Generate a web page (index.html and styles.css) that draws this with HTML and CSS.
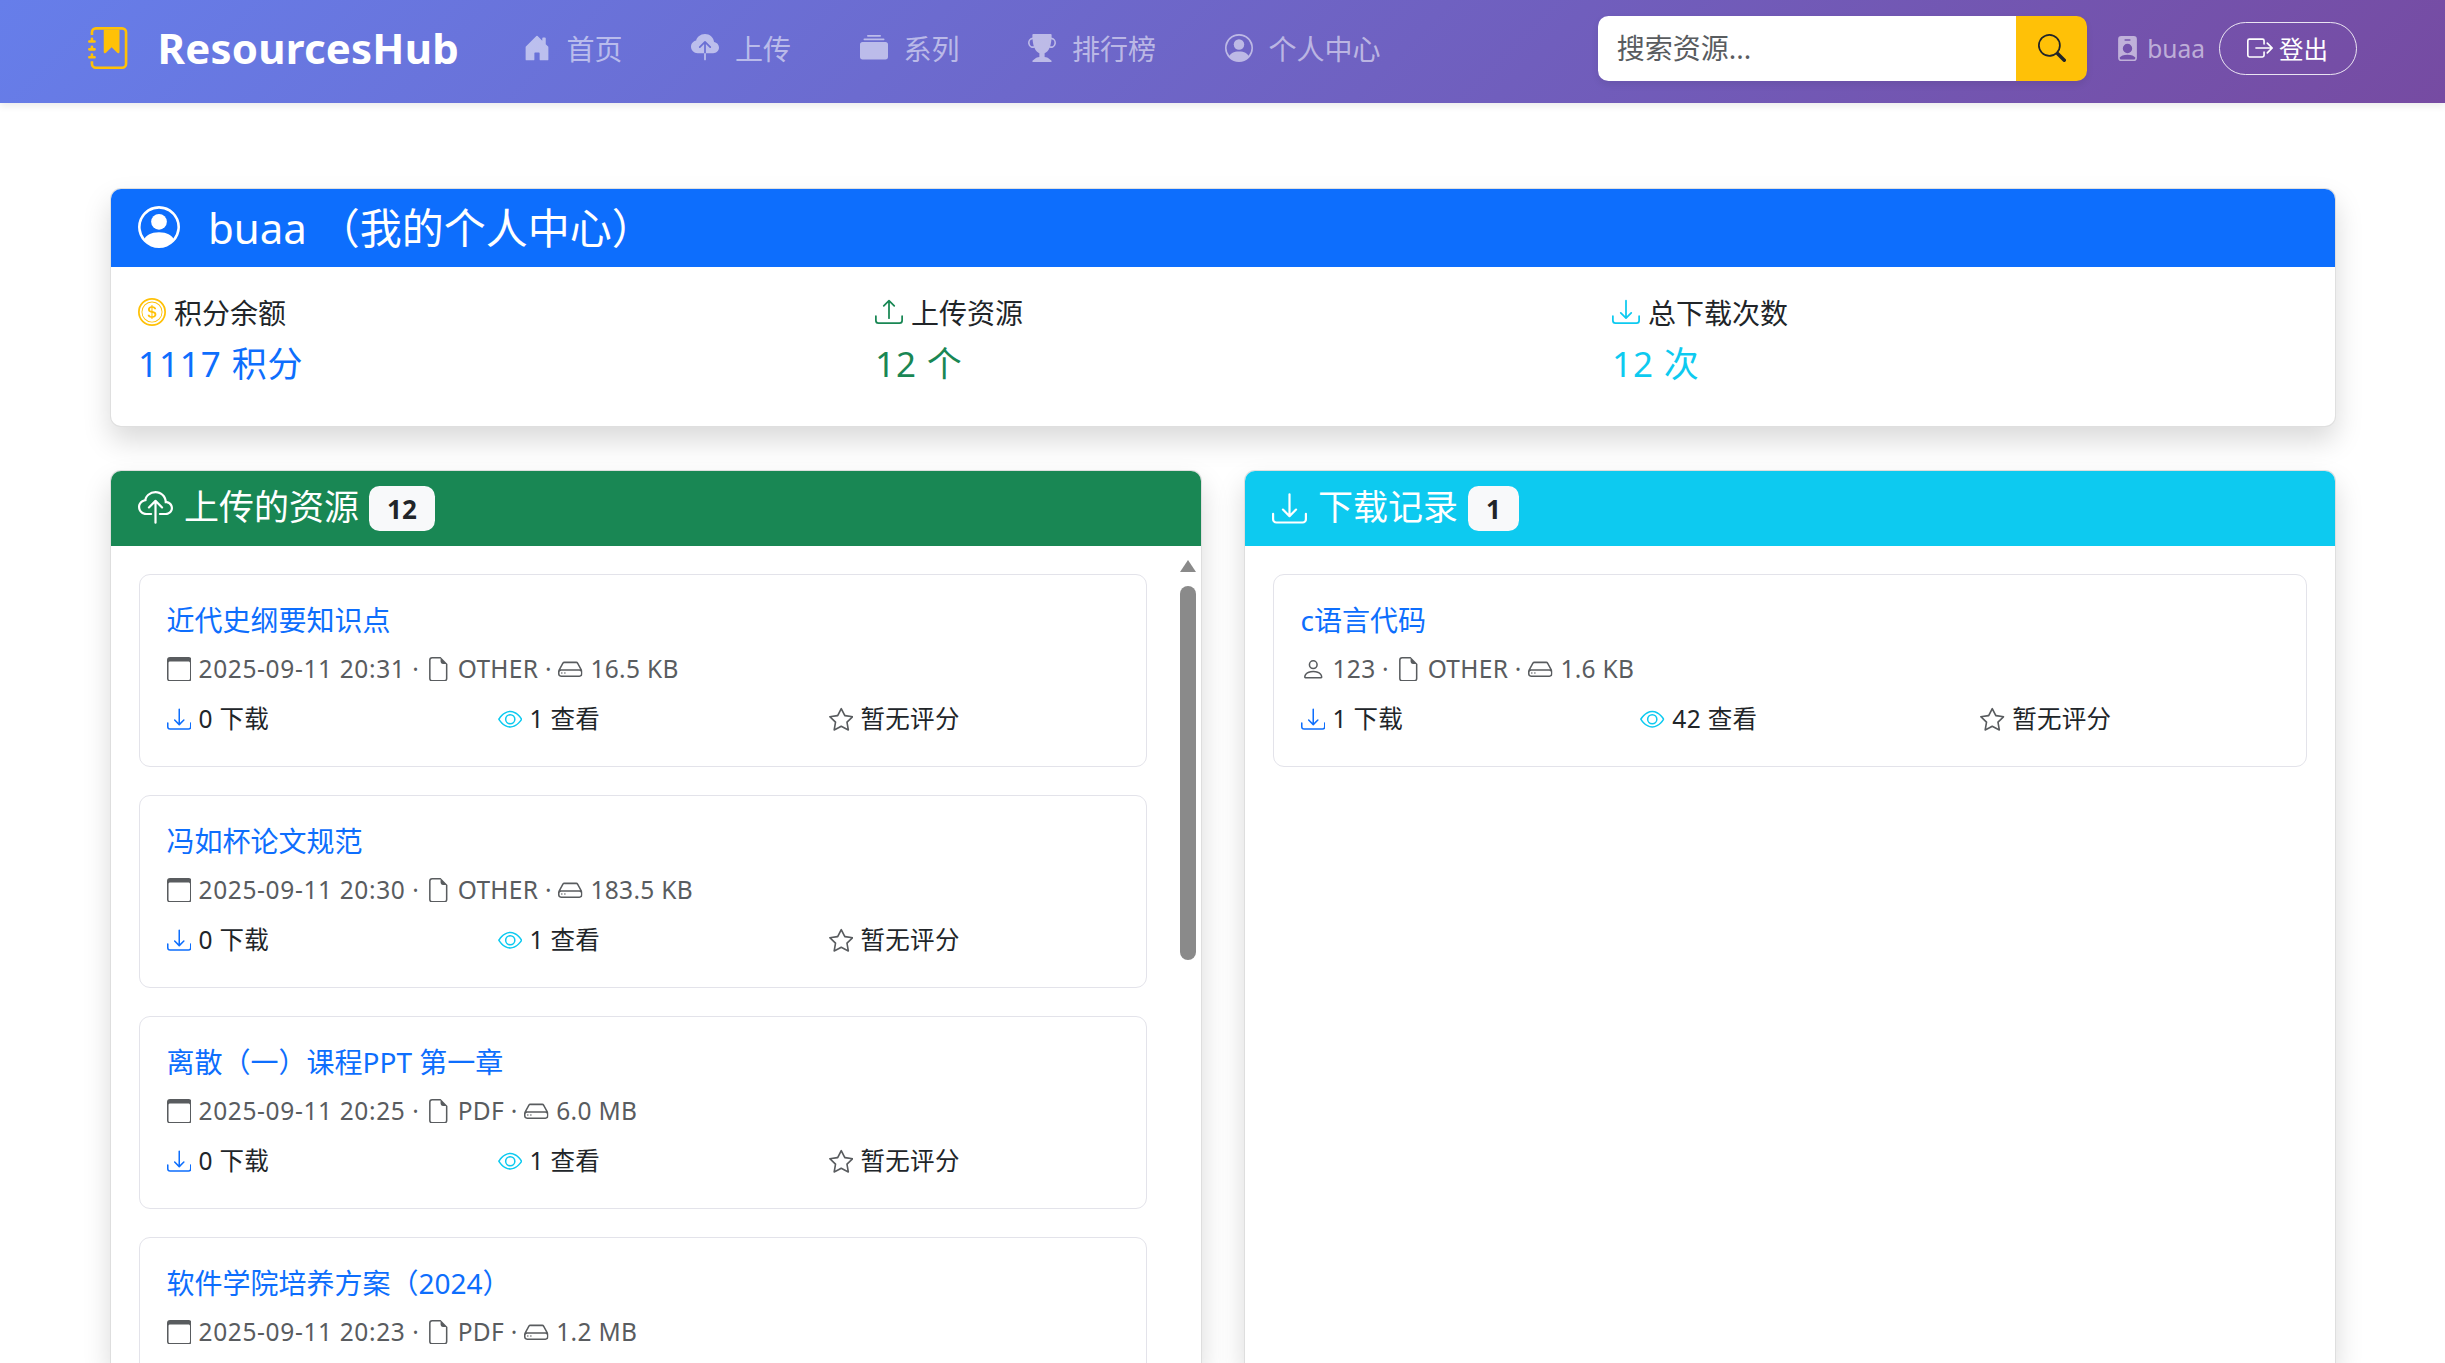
FILE: index.html
```html
<!DOCTYPE html>
<html lang="zh-CN">
<head>
<meta charset="utf-8">
<title>ResourcesHub</title>
<link rel="stylesheet" href="styles.css">
</head>
<body>
<svg class="sprite" xmlns="http://www.w3.org/2000/svg">
<symbol id="i-journal" viewBox="0 0 16 16"><path fill-rule="evenodd" d="M6 1h6v8.5a.5.5 0 0 1-.854.354L9 7.707 6.854 9.854A.5.5 0 0 1 6 9.5z"/><path d="M3 0h10a2 2 0 0 1 2 2v12a2 2 0 0 1-2 2H3a2 2 0 0 1-2-2v-1h1v1a1 1 0 0 0 1 1h10a1 1 0 0 0 1-1V2a1 1 0 0 0-1-1H3a1 1 0 0 0-1 1v1H1V2a2 2 0 0 1 2-2"/><path d="M1 5v-.5a.5.5 0 0 1 1 0V5h.5a.5.5 0 0 1 0 1h-2a.5.5 0 0 1 0-1zm0 3v-.5a.5.5 0 0 1 1 0V8h.5a.5.5 0 0 1 0 1h-2a.5.5 0 0 1 0-1zm0 3v-.5a.5.5 0 0 1 1 0v.5h.5a.5.5 0 0 1 0 1h-2a.5.5 0 0 1 0-1z"/></symbol>
<symbol id="i-house" viewBox="0 0 16 16"><path d="M6.5 14.5v-3.505c0-.245.25-.495.5-.495h2c.25 0 .5.25.5.5v3.5a.5.5 0 0 0 .5.5h4a.5.5 0 0 0 .5-.5v-7a.5.5 0 0 0-.146-.354L13 5.793V2.5a.5.5 0 0 0-.5-.5h-1a.5.5 0 0 0-.5.5v1.293L8.354 1.146a.5.5 0 0 0-.708 0l-6 6A.5.5 0 0 0 1.5 7.5v7a.5.5 0 0 0 .5.5h4a.5.5 0 0 0 .5-.5"/></symbol>
<symbol id="i-cloud-fill" viewBox="0 0 16 16"><path fill-rule="evenodd" d="M8 0a5.53 5.53 0 0 0-3.594 1.342c-.766.66-1.321 1.52-1.464 2.383C1.266 4.095 0 5.555 0 7.318 0 9.366 1.708 11 3.781 11H7.5V5.707L5.354 7.854a.5.5 0 1 1-.708-.708l3-3a.5.5 0 0 1 .708 0l3 3a.5.5 0 0 1-.708.708L8.5 5.707V11h4.188C14.502 11 16 9.57 16 7.773c0-1.636-1.242-2.969-2.834-3.194C12.923 1.999 10.69 0 8 0m-.5 14.5V11h1v3.5a.5.5 0 0 1-1 0"/></symbol>
<symbol id="i-collection" viewBox="0 0 16 16"><path d="M0 13a1.5 1.5 0 0 0 1.5 1.5h13A1.5 1.5 0 0 0 16 13V6a1.5 1.5 0 0 0-1.5-1.5h-13A1.5 1.5 0 0 0 0 6zM2 3a.5.5 0 0 0 .5.5h11a.5.5 0 0 0 0-1h-11A.5.5 0 0 0 2 3m2-2a.5.5 0 0 0 .5.5h7a.5.5 0 0 0 0-1h-7A.5.5 0 0 0 4 1"/></symbol>
<symbol id="i-trophy" viewBox="0 0 16 16"><path d="M2.5.5A.5.5 0 0 1 3 0h10a.5.5 0 0 1 .5.5q0 .807-.034 1.536a3 3 0 1 1-1.133 5.89c-.79 1.865-1.878 2.777-2.833 3.011v2.173l1.425.356c.194.048.377.135.537.255L13.3 15.1a.5.5 0 0 1-.3.9H3a.5.5 0 0 1-.3-.9l1.838-1.379c.16-.12.343-.207.537-.255L6.5 13.11v-2.173c-.955-.234-2.043-1.146-2.833-3.012a3 3 0 1 1-1.132-5.89A33 33 0 0 1 2.5.5m.099 2.54a2 2 0 0 0 .72 3.935c-.333-1.05-.588-2.346-.72-3.935m10.083 3.935a2 2 0 0 0 .72-3.935c-.133 1.59-.388 2.885-.72 3.935"/></symbol>
<symbol id="i-person-circle" viewBox="0 0 16 16"><path d="M11 6a3 3 0 1 1-6 0 3 3 0 0 1 6 0"/><path fill-rule="evenodd" d="M0 8a8 8 0 1 1 16 0A8 8 0 0 1 0 8m8-7a7 7 0 0 0-5.468 11.37C3.242 11.226 4.805 10 8 10s4.757 1.225 5.468 2.37A7 7 0 0 0 8 1"/></symbol>
<symbol id="i-search" viewBox="0 0 16 16"><path d="M11.742 10.344a6.5 6.5 0 1 0-1.397 1.398h-.001q.044.06.098.115l3.85 3.85a1 1 0 0 0 1.415-1.414l-3.85-3.85a1 1 0 0 0-.115-.1zM12 6.5a5.5 5.5 0 1 1-11 0 5.5 5.5 0 0 1 11 0"/></symbol>
<symbol id="i-badge" viewBox="0 0 16 16"><path d="M2 2a2 2 0 0 1 2-2h8a2 2 0 0 1 2 2v12a2 2 0 0 1-2 2H4a2 2 0 0 1-2-2zm4.5 0a.5.5 0 0 0 0 1h3a.5.5 0 0 0 0-1zM8 11a3 3 0 1 0 0-6 3 3 0 0 0 0 6m5 2.755C12.146 12.825 10.623 12 8 12s-4.146.826-5 1.755V14a1 1 0 0 0 1 1h8a1 1 0 0 0 1-1z"/></symbol>
<symbol id="i-logout" viewBox="0 0 16 16"><path fill-rule="evenodd" d="M10 12.5a.5.5 0 0 1-.5.5h-8a.5.5 0 0 1-.5-.5v-9a.5.5 0 0 1 .5-.5h8a.5.5 0 0 1 .5.5v2a.5.5 0 0 0 1 0v-2A1.5 1.5 0 0 0 9.5 2h-8A1.5 1.5 0 0 0 0 3.5v9A1.5 1.5 0 0 0 1.5 14h8a1.5 1.5 0 0 0 1.5-1.5v-2a.5.5 0 0 0-1 0z"/><path fill-rule="evenodd" d="M15.854 8.354a.5.5 0 0 0 0-.708l-3-3a.5.5 0 0 0-.708.708L14.293 7.5H5.5a.5.5 0 0 0 0 1h8.793l-2.147 2.146a.5.5 0 0 0 .708.708z"/></symbol>
<symbol id="i-coin" viewBox="0 0 16 16"><path d="M5.5 9.511c.076.954.83 1.697 2.182 1.785V12h.6v-.709c1.4-.098 2.218-.846 2.218-1.932 0-.987-.626-1.496-1.745-1.76l-.473-.112V5.57c.6.068.982.396 1.074.85h1.052c-.076-.919-.864-1.638-2.126-1.716V4h-.6v.719c-1.195.117-2.01.836-2.01 1.853 0 .9.606 1.472 1.613 1.707l.397.098v2.034c-.615-.093-1.022-.43-1.114-.9zm2.177-2.166c-.59-.137-.91-.416-.91-.836 0-.47.345-.822.915-.925v1.76h-.005zm.692 1.193c.717.166 1.048.435 1.048.91 0 .542-.412.914-1.135.982V8.518z"/><path d="M8 15A7 7 0 1 1 8 1a7 7 0 0 1 0 14m0 1A8 8 0 1 0 8 0a8 8 0 0 0 0 16"/><path d="M8 13.5a5.5 5.5 0 1 1 0-11 5.5 5.5 0 0 1 0 11m0 .5A6 6 0 1 0 8 2a6 6 0 0 0 0 12"/></symbol>
<symbol id="i-upload" viewBox="0 0 16 16"><path d="M.5 9.9a.5.5 0 0 1 .5.5v2.5a1 1 0 0 0 1 1h12a1 1 0 0 0 1-1v-2.5a.5.5 0 0 1 1 0v2.5a2 2 0 0 1-2 2H2a2 2 0 0 1-2-2v-2.5a.5.5 0 0 1 .5-.5"/><path d="M7.646 1.146a.5.5 0 0 1 .708 0l3 3a.5.5 0 0 1-.708.708L8.5 2.707V11.5a.5.5 0 0 1-1 0V2.707L5.354 4.854a.5.5 0 1 1-.708-.708z"/></symbol>
<symbol id="i-download" viewBox="0 0 16 16"><path d="M.5 9.9a.5.5 0 0 1 .5.5v2.5a1 1 0 0 0 1 1h12a1 1 0 0 0 1-1v-2.5a.5.5 0 0 1 1 0v2.5a2 2 0 0 1-2 2H2a2 2 0 0 1-2-2v-2.5a.5.5 0 0 1 .5-.5"/><path d="M7.646 11.854a.5.5 0 0 0 .708 0l3-3a.5.5 0 0 0-.708-.708L8.5 10.293V1.5a.5.5 0 0 0-1 0v8.793L5.354 8.146a.5.5 0 1 0-.708.708z"/></symbol>
<symbol id="i-cloud" viewBox="0 0 16 16"><path fill-rule="evenodd" d="M4.406 1.342A5.53 5.53 0 0 1 8 0c2.69 0 4.923 2 5.166 4.579C14.758 4.804 16 6.137 16 7.773 16 9.569 14.502 11 12.687 11H10a.5.5 0 0 1 0-1h2.688C13.979 10 15 8.988 15 7.773c0-1.216-1.02-2.228-2.313-2.228h-.5v-.5C12.188 2.825 10.328 1 8 1a4.53 4.53 0 0 0-2.941 1.1c-.757.652-1.153 1.438-1.153 2.055v.448l-.445.049C2.064 4.805 1 5.952 1 7.318 1 8.785 2.23 10 3.781 10H6a.5.5 0 0 1 0 1H3.781C1.708 11 0 9.366 0 7.318c0-1.763 1.266-3.223 2.942-3.593.143-.863.698-1.723 1.464-2.383"/><path fill-rule="evenodd" d="M7.646 4.146a.5.5 0 0 1 .708 0l3 3a.5.5 0 0 1-.708.708L8.5 5.707V14.5a.5.5 0 0 1-1 0V5.707L5.354 7.854a.5.5 0 1 1-.708-.708z"/></symbol>
<symbol id="i-calendar" viewBox="0 0 16 16"><path d="M14 0H2a2 2 0 0 0-2 2v12a2 2 0 0 0 2 2h12a2 2 0 0 0 2-2V2a2 2 0 0 0-2-2M1 3.857C1 3.384 1.448 3 2 3h12c.552 0 1 .384 1 .857v10.286c0 .473-.448.857-1 .857H2c-.552 0-1-.384-1-.857z"/></symbol>
<symbol id="i-file" viewBox="0 0 16 16"><path d="M14 4.5V14a2 2 0 0 1-2 2H4a2 2 0 0 1-2-2V2a2 2 0 0 1 2-2h5.5zm-3 0A1.5 1.5 0 0 1 9.5 3V1H4a1 1 0 0 0-1 1v12a1 1 0 0 0 1 1h8a1 1 0 0 0 1-1V4.5z"/></symbol>
<symbol id="i-hdd" viewBox="0 0 16 16"><path d="M4.5 11a.5.5 0 1 0 0-1 .5.5 0 0 0 0 1M3 10.5a.5.5 0 1 1-1 0 .5.5 0 0 1 1 0"/><path d="M16 11a2 2 0 0 1-2 2H2a2 2 0 0 1-2-2V9.51c0-.418.105-.83.305-1.197l2.472-4.531A1.5 1.5 0 0 1 4.094 3h7.812a1.5 1.5 0 0 1 1.317.782l2.472 4.53c.2.368.305.78.305 1.198zM3.655 4.26 1.592 8.043Q1.79 8 2 8h12c.14 0 .278.014.408.042L12.345 4.26a.5.5 0 0 0-.439-.26H4.094a.5.5 0 0 0-.44.26zM1 11a1 1 0 0 0 1 1h12a1 1 0 0 0 1-1v-1a1 1 0 0 0-1-1H2a1 1 0 0 0-1 1z"/></symbol>
<symbol id="i-eye" viewBox="0 0 16 16"><path d="M16 8s-3-5.5-8-5.5S0 8 0 8s3 5.5 8 5.5S16 8 16 8M1.173 8a13 13 0 0 1 1.66-2.043C4.12 4.668 5.88 3.5 8 3.5s3.879 1.168 5.168 2.457A13 13 0 0 1 14.828 8q-.086.13-.195.288c-.335.48-.83 1.12-1.465 1.755C11.879 11.332 10.119 12.5 8 12.5s-3.879-1.168-5.168-2.457A13 13 0 0 1 1.172 8z"/><path d="M8 5.5a2.5 2.5 0 1 0 0 5 2.5 2.5 0 0 0 0-5M4.5 8a3.5 3.5 0 1 1 7 0 3.5 3.5 0 0 1-7 0"/></symbol>
<symbol id="i-star" viewBox="0 0 16 16"><path d="M2.866 14.85c-.078.444.36.791.746.593l4.39-2.256 4.389 2.256c.386.198.824-.149.746-.592l-.83-4.73 3.522-3.356c.33-.314.16-.888-.282-.95l-4.898-.696L8.465.792a.513.513 0 0 0-.927 0L5.354 5.12l-4.898.696c-.441.062-.612.636-.283.95l3.523 3.356-.83 4.73zm4.905-2.767-3.686 1.894.694-3.957a.56.56 0 0 0-.163-.505L1.71 6.745l4.052-.576a.53.53 0 0 0 .393-.288L8 2.223l1.847 3.658a.53.53 0 0 0 .393.288l4.052.575-2.906 2.77a.56.56 0 0 0-.163.506l.694 3.957-3.686-1.894a.5.5 0 0 0-.461 0z"/></symbol>
<symbol id="i-person" viewBox="0 0 16 16"><path d="M8 8a3 3 0 1 0 0-6 3 3 0 0 0 0 6m2-3a2 2 0 1 1-4 0 2 2 0 0 1 4 0m4 8c0 1-1 1-1 1H3s-1 0-1-1 1-4 6-4 6 3 6 4m-1-.004c-.001-.246-.154-.986-.832-1.664C11.516 10.68 10.289 10 8 10s-3.516.68-4.168 1.332c-.678.678-.83 1.418-.832 1.664z"/></symbol>
</svg>

<nav class="navbar">
  <a class="brand" href="#"><svg class="brand-icon"><use href="#i-journal"/></svg><span class="brand-text">ResourcesHub</span></a>
  <ul class="nav-links">
    <li><a href="#"><svg class="nav-icon"><use href="#i-house"/></svg>首页</a></li>
    <li><a href="#"><svg class="nav-icon"><use href="#i-cloud-fill"/></svg>上传</a></li>
    <li><a href="#"><svg class="nav-icon"><use href="#i-collection"/></svg>系列</a></li>
    <li><a href="#"><svg class="nav-icon"><use href="#i-trophy"/></svg>排行榜</a></li>
    <li><a href="#"><svg class="nav-icon"><use href="#i-person-circle"/></svg>个人中心</a></li>
  </ul>
  <form class="search">
    <input class="search-input" type="text" placeholder="搜索资源...">
    <button class="search-btn" type="button"><svg class="search-icon"><use href="#i-search"/></svg></button>
  </form>
  <span class="nav-user"><svg class="user-icon"><use href="#i-badge"/></svg>buaa</span>
  <a class="logout" href="#"><svg class="logout-icon"><use href="#i-logout"/></svg>登出</a>
</nav>

<main class="page">
  <section class="card profile">
    <header class="profile-head"><svg class="profile-icon"><use href="#i-person-circle"/></svg><h1 class="profile-name">buaa （我的个人中心）</h1></header>
    <div class="profile-stats">
      <div>
        <div class="stat-label"><svg class="stat-icon c-yellow"><use href="#i-coin"/></svg>积分余额</div>
        <div class="stat-value c-blue">1117 积分</div>
      </div>
      <div>
        <div class="stat-label"><svg class="stat-icon c-green"><use href="#i-upload"/></svg>上传资源</div>
        <div class="stat-value c-green">12 个</div>
      </div>
      <div>
        <div class="stat-label"><svg class="stat-icon c-cyan"><use href="#i-download"/></svg>总下载次数</div>
        <div class="stat-value c-cyan">12 次</div>
      </div>
    </div>
  </section>

  <div class="columns">
    <section class="card panel">
      <header class="panel-head bg-green"><svg class="panel-icon"><use href="#i-cloud"/></svg><h2 class="panel-title">上传的资源</h2><span class="badge">12</span></header>
      <div class="list">
        <article class="item">
          <a class="item-title" href="#">近代史纲要知识点</a>
          <p class="item-meta"><svg class="meta-icon"><use href="#i-calendar"/></svg><span class="date">2025-09-11 20:31</span> · <svg class="meta-icon"><use href="#i-file"/></svg>OTHER · <svg class="meta-icon"><use href="#i-hdd"/></svg>16.5 KB</p>
          <div class="item-stats">
            <span><svg class="meta-icon c-blue"><use href="#i-download"/></svg>0 下载</span>
            <span><svg class="meta-icon c-cyan"><use href="#i-eye"/></svg>1 查看</span>
            <span><svg class="meta-icon c-gray"><use href="#i-star"/></svg>暂无评分</span>
          </div>
        </article>
        <article class="item">
          <a class="item-title" href="#">冯如杯论文规范</a>
          <p class="item-meta"><svg class="meta-icon"><use href="#i-calendar"/></svg><span class="date">2025-09-11 20:30</span> · <svg class="meta-icon"><use href="#i-file"/></svg>OTHER · <svg class="meta-icon"><use href="#i-hdd"/></svg>183.5 KB</p>
          <div class="item-stats">
            <span><svg class="meta-icon c-blue"><use href="#i-download"/></svg>0 下载</span>
            <span><svg class="meta-icon c-cyan"><use href="#i-eye"/></svg>1 查看</span>
            <span><svg class="meta-icon c-gray"><use href="#i-star"/></svg>暂无评分</span>
          </div>
        </article>
        <article class="item">
          <a class="item-title" href="#">离散（一）课程PPT 第一章</a>
          <p class="item-meta"><svg class="meta-icon"><use href="#i-calendar"/></svg><span class="date">2025-09-11 20:25</span> · <svg class="meta-icon"><use href="#i-file"/></svg>PDF · <svg class="meta-icon"><use href="#i-hdd"/></svg>6.0 MB</p>
          <div class="item-stats">
            <span><svg class="meta-icon c-blue"><use href="#i-download"/></svg>0 下载</span>
            <span><svg class="meta-icon c-cyan"><use href="#i-eye"/></svg>1 查看</span>
            <span><svg class="meta-icon c-gray"><use href="#i-star"/></svg>暂无评分</span>
          </div>
        </article>
        <article class="item">
          <a class="item-title" href="#">软件学院培养方案（2024）</a>
          <p class="item-meta"><svg class="meta-icon"><use href="#i-calendar"/></svg><span class="date">2025-09-11 20:23</span> · <svg class="meta-icon"><use href="#i-file"/></svg>PDF · <svg class="meta-icon"><use href="#i-hdd"/></svg>1.2 MB</p>
        </article>
        <div class="scrollbar"><span class="scroll-arrow"></span><span class="scroll-thumb"></span></div>
      </div>
    </section>

    <section class="card panel">
      <header class="panel-head bg-cyan"><svg class="panel-icon"><use href="#i-download"/></svg><h2 class="panel-title">下载记录</h2><span class="badge">1</span></header>
      <div class="list">
        <article class="item item-wide">
          <a class="item-title" href="#">c语言代码</a>
          <p class="item-meta"><svg class="meta-icon"><use href="#i-person"/></svg>123 · <svg class="meta-icon"><use href="#i-file"/></svg>OTHER · <svg class="meta-icon"><use href="#i-hdd"/></svg>1.6 KB</p>
          <div class="item-stats">
            <span><svg class="meta-icon c-blue"><use href="#i-download"/></svg>1 下载</span>
            <span><svg class="meta-icon c-cyan"><use href="#i-eye"/></svg>42 查看</span>
            <span><svg class="meta-icon c-gray"><use href="#i-star"/></svg>暂无评分</span>
          </div>
        </article>
      </div>
    </section>
  </div>
</main>
</body>
</html>
```

FILE: styles.css
```css
* { box-sizing: border-box; }
html, body { margin: 0; height: 100%; overflow: hidden; background: #fff; }
body {
  font-family: "Noto Sans", "Noto Sans CJK SC", sans-serif;
  font-size: 28px;
  color: #212529;
}
a { text-decoration: none; color: inherit; }
svg { fill: currentColor; flex: none; }
.sprite { display: none; }
.c-yellow { color: #ffc107; }
.c-blue { color: #0d6efd; }
.c-green { color: #198754; }
.c-cyan { color: #0dcaf0; }
.c-gray { color: #595c5f; }

/* navbar */
.navbar {
  height: 103px;
  padding: 0 88px 7px;
  display: flex;
  align-items: center;
  background: linear-gradient(135deg, #667eea 0%, #764ba2 100%);
  box-shadow: 0 3.5px 7px rgba(0, 0, 0, .075);
  position: relative;
}
.brand { display: flex; align-items: center; color: #fff; }
.brand-icon { width: 42px; height: 42px; color: #ffc107; margin-right: 27.5px; }
.brand-text { font-size: 42px; font-weight: 700; letter-spacing: .2px; line-height: 1; }
.nav-links {
  list-style: none;
  margin: 0 0 0 64px;
  padding: 0;
  display: flex;
  gap: 69px;
}
.nav-links a { display: flex; align-items: center; color: rgba(255, 255, 255, .55); }
.nav-icon { width: 28px; height: 28px; margin-right: 15.5px; }
.search {
  margin-left: auto;
  width: 489.5px;
  height: 65px;
  display: flex;
  border-radius: 10.5px;
  overflow: hidden;
  box-shadow: 0 3.5px 7px rgba(0, 0, 0, .075);
}
.search-input {
  flex: 1;
  min-width: 0;
  border: 0;
  outline: 0;
  padding: 0 19px;
  font: inherit;
  color: #212529;
  background: #fff;
}
.search-input::placeholder { color: #595c5f; opacity: 1; }
.search-btn {
  width: 71px;
  border: 0;
  padding: 0;
  background: #ffc107;
  color: #212529;
  display: flex;
  align-items: center;
  justify-content: center;
}
.search-icon { width: 28px; height: 28px; }
.nav-user {
  margin-left: 28px;
  display: flex;
  align-items: center;
  font-size: 24.5px;
  color: rgba(255, 255, 255, .55);
}
.user-icon { width: 25px; height: 25px; margin-right: 7px; }
.logout {
  margin-left: 14px;
  width: 138px;
  height: 53px;
  border: 1px solid rgba(255, 255, 255, .85);
  border-radius: 27px;
  padding-left: 27px;
  display: flex;
  align-items: center;
  color: #fff;
  font-size: 24.5px;
}
.logout-icon { width: 26px; height: 26px; margin-right: 6px; }

/* page */
.page { padding: 85px 109px 0 110px; }
.card {
  background: #fff;
  border: 1px solid rgba(0, 0, 0, .125);
  border-radius: 11px;
  box-shadow: 0 14px 28px rgba(0, 0, 0, .15);
  overflow: hidden;
}
.profile-head {
  height: 78px;
  padding: 0 27px;
  display: flex;
  align-items: center;
  background: #0d6efd;
  color: #fff;
}
.profile-icon { width: 42px; height: 42px; margin: 0 28px 2px 0; }
.profile-name { margin: 0; font-size: 42px; font-weight: 400; line-height: 1.2; }
.profile-stats {
  height: 159px;
  padding: 26.5px 28px 0 27px;
  display: grid;
  grid-template-columns: repeat(3, 1fr);
  column-gap: 42px;
}
.stat-label { display: flex; align-items: center; height: 36px; }
.stat-icon { width: 28px; height: 28px; margin-right: 8px; }
.stat-value { font-size: 35px; line-height: 48px; margin-top: 10.5px; letter-spacing: .9px; }

.columns {
  margin-top: 43px;
  display: grid;
  grid-template-columns: 1fr 1fr;
  gap: 42px;
  height: 893px;
}
.panel {
  min-width: 0;
  display: flex;
  flex-direction: column;
  border-bottom: 0;
  border-bottom-left-radius: 0;
  border-bottom-right-radius: 0;
}
.panel-head {
  height: 75px;
  padding: 0 27px;
  display: flex;
  align-items: center;
  flex: none;
  color: #fff;
}
.bg-green { background: #198754; }
.bg-cyan { background: #0dcaf0; }
.panel-icon { width: 35px; height: 35px; margin-right: 11px; }
.panel-title { margin: 0 0 3px; font-size: 35px; font-weight: 400; line-height: 1.2; }
.badge {
  margin-left: 10px;
  height: 45px;
  padding: 0 18px;
  display: flex;
  align-items: center;
  border-radius: 10.5px;
  background: #f8f9fa;
  color: #212529;
  font-size: 26px;
  font-weight: 700;
}
.list {
  position: relative;
  flex: 1;
  min-height: 0;
  overflow: hidden;
  padding: 28px 54.5px 0 27.5px;
  display: flex;
  flex-direction: column;
  gap: 28px;
}
.item {
  height: 193px;
  padding: 27px 26px 0 27px;
  border: 1px solid #e3e3ea;
  border-radius: 11px;
  background: #fff;
  flex: none;
}
.item-wide { margin-right: -26.5px; }
.item-title { display: block; line-height: 36px; color: #0d6efd; }
.item-meta { margin: 13px 0 0; font-size: 24.5px; line-height: 36px; color: #595c5f; white-space: nowrap; letter-spacing: .3px; }
.date { letter-spacing: .63px; }
.meta-icon { width: 24.5px; height: 24.5px; margin-right: 7.5px; vertical-align: -3px; }
.item-stats {
  margin-top: 14px;
  display: grid;
  grid-template-columns: repeat(3, 1fr);
  column-gap: 40px;
  font-size: 24.5px;
  line-height: 36px;
  letter-spacing: .3px;
}
.item-stats span { display: flex; align-items: center; white-space: nowrap; }

/* scrollbar drawn over the list */
.scrollbar { position: absolute; top: 0; right: 5px; width: 16px; bottom: 0; }
.scroll-arrow {
  position: absolute;
  top: 14px;
  left: 0;
  width: 0;
  height: 0;
  border-left: 8px solid transparent;
  border-right: 8px solid transparent;
  border-bottom: 12px solid #8a8a8a;
}
.scroll-thumb {
  position: absolute;
  top: 40px;
  left: 0;
  width: 16px;
  height: 374px;
  border-radius: 8px;
  background: #8a8a8a;
}
```
